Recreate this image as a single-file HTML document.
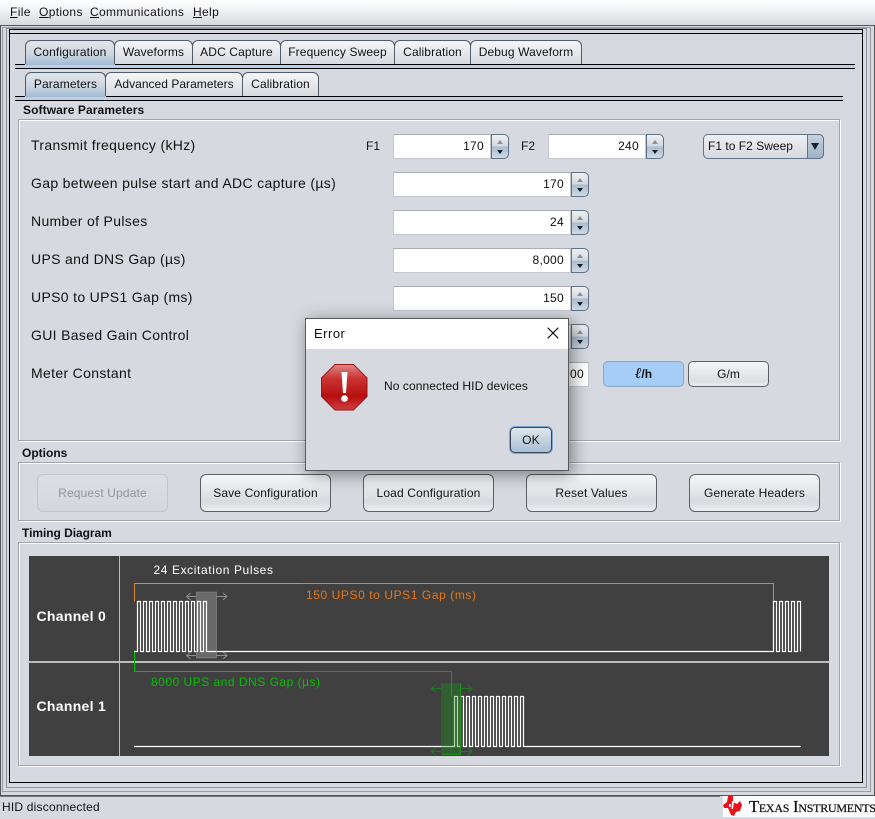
<!DOCTYPE html>
<html><head><meta charset="utf-8"><style>
html,body{margin:0;padding:0}
body{width:875px;height:819px;position:relative;overflow:hidden;background:#d6d9df;font-family:"Liberation Sans",sans-serif;font-size:12px;color:#111}
.a,.t,.l,.f,.s,.b,.g,.x{position:absolute;box-sizing:border-box}
.x{white-space:nowrap}
.m{letter-spacing:.35px;line-height:14px;top:5px}
.t{height:25px;border:1px solid #4f5c6b;border-bottom:0;border-radius:6px 6px 0 0;background:linear-gradient(#f4f5f7,#d6d9df);text-align:center;line-height:22px;letter-spacing:.12px;white-space:nowrap}
.t.on{background:linear-gradient(#dfe4ea 10%,#cbd6e0 55%,#a4bcd3)}
.l{white-space:nowrap;font-size:14px;left:31px;line-height:16px;letter-spacing:.33px}
.f{background:#fff;border:1px solid #c3c6cc;border-top-color:#a9acb2;text-align:right;height:25px;line-height:23px;padding-right:6px;letter-spacing:.3px;white-space:nowrap;overflow:hidden}
.s{width:18px;height:25px;border:1px solid #5f7288;border-radius:0 5px 5px 0;background:linear-gradient(#eef0f3,#d4d8de 50%,#a9bccf 50%,#cfd9e3);}
.s:before{content:"";position:absolute;left:5px;top:5px;border:3px solid transparent;border-top:0;border-bottom:4px solid #8a8f96}
.s:after{content:"";position:absolute;left:5px;top:15px;border:3px solid transparent;border-bottom:0;border-top:4px solid #16202b}
.b{height:38px;top:474px;width:131px;border:1px solid #5e6066;border-radius:6px;background:linear-gradient(#f5f6f7,#d9dbe0 75%,#eceef1);text-align:center;line-height:36px;letter-spacing:.14px}
.g{border:1px solid #a2a4a9;box-shadow:inset 1px 1px 0 #fff,1px 1px 0 #fff;left:18px;width:822px}
.h{position:absolute;font-weight:bold;white-space:nowrap}
</style></head><body>
<!-- menu bar -->
<div class="a" style="left:0;top:0;width:875px;height:25px;background:linear-gradient(#fff,#f3f4f6 35%,#d6d9df)"></div>
<div class="x m" style="left:10px"><u>F</u>ile</div>
<div class="x m" style="left:39px"><u>O</u>ptions</div>
<div class="x m" style="left:90px"><u>C</u>ommunications</div>
<div class="x m" style="left:193px"><u>H</u>elp</div>
<!-- window frames -->
<div class="a" style="left:0;top:25px;width:875px;height:771px;border:1px solid #555"></div>
<div class="a" style="left:2px;top:27px;width:869px;height:765px;border:1px solid #9a9da3"></div>
<div class="a" style="left:6px;top:28px;width:861px;height:760px;border:1px solid #8f9298"></div>
<div class="a" style="left:9px;top:29px;width:854px;height:754px;border:1px solid #000"></div>
<div class="a" style="left:9px;top:33px;width:854px;height:1px;background:#000"></div>
<!-- top tabs -->
<div class="t on" style="left:25px;top:40px;width:90px">Configuration</div>
<div class="t" style="left:114px;top:40px;width:79px">Waveforms</div>
<div class="t" style="left:192px;top:40px;width:89px">ADC Capture</div>
<div class="t" style="left:280px;top:40px;width:115px">Frequency Sweep</div>
<div class="t" style="left:394px;top:40px;width:77px">Calibration</div>
<div class="t" style="left:470px;top:40px;width:112px">Debug Waveform</div>
<div class="a" style="left:15px;top:64px;width:840px;height:5px;background:#b9d0e8;border-top:1px solid #000;border-bottom:1px solid #000"></div>
<div class="a" style="left:25px;top:64px;width:90px;height:1px;background:#a4bcd3"></div>
<!-- sub tabs -->
<div class="t on" style="left:25px;top:72px;width:81px">Parameters</div>
<div class="t" style="left:105px;top:72px;width:138px;letter-spacing:.03px">Advanced Parameters</div>
<div class="t" style="left:242px;top:72px;width:77px">Calibration</div>
<div class="a" style="left:15px;top:96px;width:828px;height:5px;background:#b9d0e8;border-top:1px solid #000;border-bottom:1px solid #000"></div>
<div class="a" style="left:25px;top:96px;width:81px;height:1px;background:#a4bcd3"></div>
<!-- software parameters -->
<div class="h" style="left:23px;top:103px;line-height:14px;letter-spacing:.1px">Software Parameters</div>
<div class="g" style="top:119px;height:322px"></div>
<div class="l" style="top:137px">Transmit frequency (kHz)</div>
<div class="l" style="top:175px">Gap between pulse start and ADC capture (µs)</div>
<div class="l" style="top:213px">Number of Pulses</div>
<div class="l" style="top:251px">UPS and DNS Gap (µs)</div>
<div class="l" style="top:289px">UPS0 to UPS1 Gap (ms)</div>
<div class="l" style="top:327px">GUI Based Gain Control</div>
<div class="l" style="top:365px">Meter Constant</div>
<div class="x" style="left:366px;top:139px;line-height:14px">F1</div>
<div class="f" style="left:393px;top:134px;width:98px">170</div><div class="s" style="left:491px;top:134px"></div>
<div class="x" style="left:521px;top:139px;line-height:14px">F2</div>
<div class="f" style="left:548px;top:134px;width:98px">240</div><div class="s" style="left:646px;top:134px"></div>
<div class="a" style="left:703px;top:134px;width:121px;height:25px;border:1px solid #5f7288;border-radius:5px;background:linear-gradient(#eef0f3,#d6d9df);line-height:23px;padding-left:4px;letter-spacing:.02px;white-space:nowrap">F1 to F2 Sweep</div>
<div class="a" style="left:807px;top:134px;width:17px;height:25px;border:1px solid #5f7288;border-radius:0 5px 5px 0;background:linear-gradient(#c5d1dd,#9fb4c8)"><div class="a" style="left:3px;top:8px;border:4.5px solid transparent;border-bottom:0;border-top:7px solid #16202b"></div></div>
<div class="f" style="left:393px;top:172px;width:178px">170</div><div class="s" style="left:571px;top:172px"></div>
<div class="f" style="left:393px;top:210px;width:178px">24</div><div class="s" style="left:571px;top:210px"></div>
<div class="f" style="left:393px;top:248px;width:178px">8,000</div><div class="s" style="left:571px;top:248px"></div>
<div class="f" style="left:393px;top:286px;width:178px">150</div><div class="s" style="left:571px;top:286px"></div>
<div class="f" style="left:393px;top:324px;width:178px">0</div><div class="s" style="left:571px;top:324px"></div>
<div class="f" style="left:393px;top:362px;width:196px;padding-right:4px">1,000.00</div>
<div class="a" style="left:603px;top:361px;width:81px;height:26px;border:1px solid #8ba6c2;border-radius:5px;background:#a5cdf8;text-align:center;line-height:24px;font-weight:bold"><i style="font-family:'Liberation Serif',serif;font-size:15px;color:#000">ℓ</i>/h</div>
<div class="a" style="left:688px;top:361px;width:81px;height:26px;border:1px solid #5e6066;border-radius:5px;background:linear-gradient(#f5f6f7,#dcdee2 80%,#eceef1);text-align:center;line-height:24px">G/m</div>
<!-- options -->
<div class="h" style="left:22px;top:446px;line-height:14px">Options</div>
<div class="g" style="top:462px;height:59px"></div>
<div class="b" style="left:37px;border-color:#c2c5cb;background:linear-gradient(#dcdfe4,#d4d7dd);color:#92959b">Request Update</div>
<div class="b" style="left:200px">Save Configuration</div>
<div class="b" style="left:363px">Load Configuration</div>
<div class="b" style="left:526px">Reset Values</div>
<div class="b" style="left:689px">Generate Headers</div>
<!-- timing -->
<div class="h" style="left:22px;top:526px;line-height:14px;letter-spacing:-.05px">Timing Diagram</div>
<div class="g" style="top:542px;height:224px"></div>
<svg class="a" style="left:29px;top:556px" width="800" height="200" viewBox="29 556 800 200" xmlns="http://www.w3.org/2000/svg">
<rect x="29" y="556" width="800" height="200" fill="#404040"/>
<rect x="119" y="556" width="1" height="200" fill="#bdbdbd"/>
<rect x="29" y="661" width="800" height="2" fill="#bdbdbd"/>
<path d="M134.5 601.5V583.5H773.5V601" fill="none" stroke="#d98a28"/>
<path d="M134 583.5H300" fill="none" stroke="#f08a10"/>
<path d="M134 651.5H137.5V601.5h3V651.5h3V601.5h3V651.5h3V601.5h3V651.5h3V601.5h3V651.5h3V601.5h3V651.5h3V601.5h3V651.5h3V601.5h3V651.5h3V601.5h3V651.5h3V601.5h3V651.5h3V601.5h3V651.5h3V601.5h3V651.5h3V601.5h3V651.5H773.5V601.5h3V651.5h3V601.5h3V651.5h3V601.5h3V651.5h3V601.5h3V651.5h3V601.5h3V651.5" fill="none" stroke="#fff" stroke-width="1.2"/>
<path d="M134.5 652V671.5H300" fill="none" stroke="#00c000"/>
<path d="M300 671.5H451.500V697" fill="none" stroke="#1a9a1a"/>
<path d="M134 746.500H454.500V696.500h3V746.500h3V696.500h3V746.500h3V696.500h3V746.500h3V696.500h3V746.500h3V696.500h3V746.500h3V696.500h3V746.500h3V696.500h3V746.500h3V696.500h3V746.500h3V696.500h3V746.500h3V696.500h3V746.500h3V696.500h3V746.500h3V696.500h3V746.500H801" fill="none" stroke="#fff" stroke-width="1.2"/>
<rect x="196.500" y="592" width="20" height="66" fill="#fff" fill-opacity=".22" stroke="#8c8c8c" stroke-width=".6"/>
<path d="M196 596.500H187M190.500 593L186.500 596.500L190.500 600M216 596.500H226.500M223 593L227 596.500L223 600M196 655.500H187M190.500 652L186.500 655.500L190.500 659M216 655.500H226.500M223 652L227 655.500L223 659" fill="none" stroke="#8f8f8f"/>
<rect x="441" y="683" width="19.500" height="71" fill="#1a9a1a" fill-opacity=".35"/>
<path d="M442 754.500H460.500V683" fill="none" stroke="#1f8f1f"/>
<path d="M441 688.500H432M435.500 685L431.500 688.500L435.500 692M461 688.500H471.500M468 685L472 688.500L468 692M441 751.500H432M435.500 748L431.500 751.500L435.500 755M461 751.500H471.500M468 748L472 751.500L468 755" fill="none" stroke="#1f7a1f"/>
<text x="36.500" y="621" font-family="Liberation Sans" font-size="14" font-weight="bold" fill="#fff" letter-spacing=".3">Channel 0</text>
<text x="36.500" y="711" font-family="Liberation Sans" font-size="14" font-weight="bold" fill="#fff" letter-spacing=".3">Channel 1</text>
<text x="153.500" y="574" font-family="Liberation Sans" font-size="12" fill="#fff" letter-spacing=".6">24 Excitation Pulses</text>
<text x="306" y="599" font-family="Liberation Sans" font-size="12" fill="#e8761a" letter-spacing=".58">150 UPS0 to UPS1 Gap (ms)</text>
<text x="151" y="686" font-family="Liberation Sans" font-size="12" fill="#00c000" letter-spacing=".5">8000 UPS and DNS Gap (µs)</text>
</svg>
<!-- status bar -->
<div class="a" style="left:0;top:796px;width:875px;height:23px;background:#d6d9df;border-top:1px solid #777"></div>
<div class="x" style="left:2px;top:800px;line-height:14px;letter-spacing:.2px">HID disconnected</div>
<div class="a" style="left:720px;top:795px;width:155px;height:24px;background:#d6d9df;border-top:1px solid #555"></div>
<div class="a" style="left:723px;top:796px;width:152px;height:21px;background:#fff;overflow:hidden">
<svg class="a" style="left:0;top:0" width="22" height="21" viewBox="0 0 22 21" xmlns="http://www.w3.org/2000/svg"><path d="M5 0H10V6L14 8L17 5L19 9L17 15L13 16L11 20L8 19L5 12H1L0 9L4 6Z" fill="#e8141c"/><path d="M9 5H11L10 13H8.500ZM6 8H8L7.500 11H6Z" fill="#fff"/></svg>
<div class="x" style="left:26px;top:2px;font-family:'Liberation Serif',serif;font-size:16.500px;line-height:18px;font-variant:small-caps;letter-spacing:-.25px;color:#111;-webkit-text-stroke:.25px #111">Texas Instruments</div>
</div>
<!-- dialog -->
<div class="a" style="left:305px;top:318px;width:264px;height:153px;background:#d6d9df;border:1px solid #5a5a5a;box-shadow:3px 3px 16px rgba(0,0,0,.45)">
<div class="a" style="left:0;top:0;width:262px;height:30px;background:#fff"></div>
<div class="x" style="left:8px;top:7px;font-size:13px;line-height:16px;letter-spacing:.5px">Error</div>
<svg class="a" style="left:241px;top:8px" width="12" height="12" viewBox="0 0 12 12" xmlns="http://www.w3.org/2000/svg"><path d="M.7 .7L11.300 11.300M11.300 .7L.7 11.300" stroke="#111" stroke-width="1.100"/></svg>
<svg class="a" style="left:15px;top:45px" width="47" height="47" viewBox="0 0 47 47" xmlns="http://www.w3.org/2000/svg"><defs><linearGradient id="r" x1="0" y1="0" x2="0" y2="1"><stop offset="0" stop-color="#dd8a8a"/><stop offset=".3" stop-color="#cc3434"/><stop offset=".7" stop-color="#b50f0f"/><stop offset="1" stop-color="#d04040"/></linearGradient></defs><path d="M14 .5H32.500L46 14V32.500L32.500 46H14L.5 32.500V14Z" fill="url(#r)" stroke="#a01414"/><path d="M20.500 8H26.500L25 29H22Z" fill="#fff"/><circle cx="23.500" cy="34.500" r="3.300" fill="#fff"/></svg>
<div class="x" style="left:78px;top:60px;line-height:14px;letter-spacing:.08px">No connected HID devices</div>
<div class="a" style="left:204px;top:108px;width:42px;height:26px;border:1px solid #34475c;border-radius:5px;box-shadow:0 0 0 1px #7fa6cf;background:linear-gradient(#dfe6ed,#a9bfd4);text-align:center;line-height:24px;letter-spacing:.2px">OK</div>
</div>
</body></html>
